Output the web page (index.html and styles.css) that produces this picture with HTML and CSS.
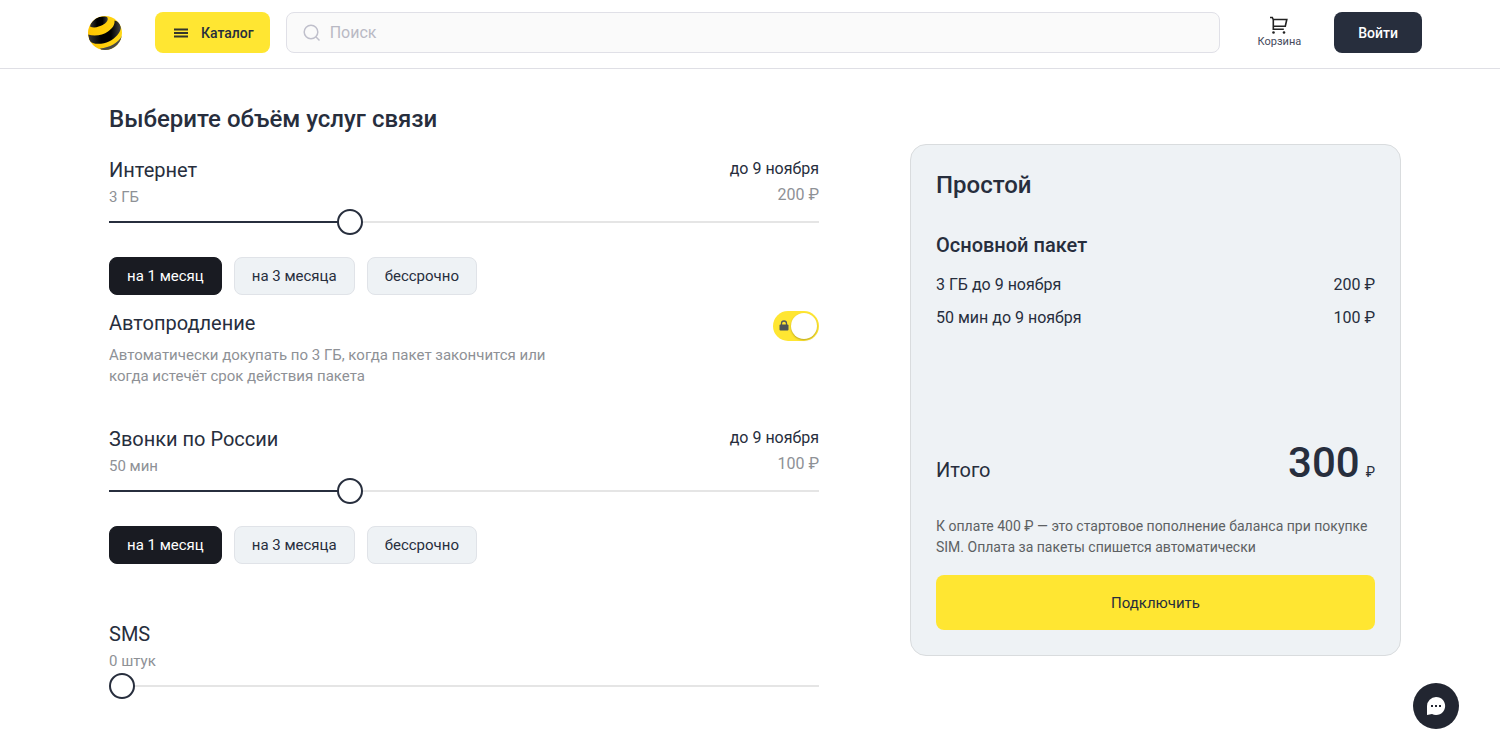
FILE: index.html
```html
<!DOCTYPE html>
<html lang="ru">
<head>
<meta charset="utf-8">
<meta name="viewport" content="width=device-width, initial-scale=1">
<title>Выберите объём услуг связи</title>
<link rel="stylesheet" href="styles.css">
</head>
<body>
<header class="header">
  <a class="logo" href="#" aria-label="Главная">
    <svg width="34" height="34" viewBox="0 0 34 34">
      <defs>
        <clipPath id="ball"><circle cx="17" cy="17" r="17"/></clipPath>
        <linearGradient id="dark" x1="0" y1="0" x2="1" y2="0"><stop offset="0" stop-color="#383838"/><stop offset=".4" stop-color="#000"/><stop offset=".7" stop-color="#000"/><stop offset="1" stop-color="#444"/></linearGradient>
        <linearGradient id="gold" x1="0" y1="0" x2="1" y2="0"><stop offset="0" stop-color="#ffc400"/><stop offset="1" stop-color="#ffd815"/></linearGradient>
      </defs>
      <g clip-path="url(#ball)">
        <rect width="34" height="34" fill="url(#gold)"/>
        <path d="M2 10.500C3 4 10-1 19 1C21 3 19 6.500 15 8.800C11 11 6 12.500 2 10.500Z" fill="url(#dark)"/>
        <path d="M0 18.500C7 21 15 19 20 15.500C24.500 12.500 27 8.500 26.500 4.500L31 6C33 9 33.500 12 32 15C29 21 23 25.500 16 27.200C10 28.500 4 28 1 24.500Z" fill="url(#dark)"/>
        <path d="M12 32.500C22 31.500 30 27 34 20L35 27L26 35H14Z" fill="#4a4a48"/>
      </g>
    </svg>
  </a>
  <button class="catalog" type="button">
    <svg width="14" height="10" viewBox="0 0 14 10"><path d="M0 1.500h14M0 5h14M0 8.500h14" stroke="#33352b" stroke-width="2"/></svg>
    Каталог
  </button>
  <label class="search">
    <svg width="18" height="18" viewBox="0 0 18 18" fill="none" stroke="#bfbfcb" stroke-width="1.5"><circle cx="8" cy="8" r="6.8"/><path d="M12.8 12.8L16.5 16.5"/></svg>
    <input class="search-input" type="search" placeholder="Поиск" aria-label="Поиск">
  </label>
  <a class="cart" href="#">
    <svg width="18" height="18" viewBox="0 0 18 18" fill="none" stroke="#222" stroke-width="1.6"><path d="M0 1.500h2.300l1 2.300v9.400h10.500"/><path d="M3 3.500h13.800l-1.500 6.700H3.300"/><g fill="#222" stroke="none"><circle cx="3.500" cy="16.500" r="1.300"/><circle cx="14" cy="16.500" r="1.300"/></g></svg>
    Корзина
  </a>
  <button class="login" type="button">Войти</button>
</header>

<main class="page">
  <form class="services">
    <h1 class="heading">Выберите объём услуг связи</h1>

    <section class="service">
      <div class="info">
        <div>
          <h2 class="name"><label for="internet">Интернет</label></h2>
          <p class="amount">3 ГБ</p>
        </div>
        <div class="price">
          <p class="until">до 9 ноября</p>
          <p class="cost">200 ₽</p>
        </div>
      </div>
      <input class="slider" id="internet" type="range" min="0" max="3" value="1" style="--fill:33%">
      <div class="periods">
        <button class="period period-active" type="button">на 1 месяц</button>
        <button class="period" type="button">на 3 месяца</button>
        <button class="period" type="button">бессрочно</button>
      </div>
      <div class="renewal">
        <div>
          <h2 class="name"><label for="renew">Автопродление</label></h2>
          <p class="hint">Автоматически докупать по 3 ГБ, когда пакет закончится или когда истечёт срок действия пакета</p>
        </div>
        <span class="switch">
          <input class="switch-input" id="renew" type="checkbox" checked>
          <svg class="lock" width="10" height="12" viewBox="0 0 10 12"><path d="M2.500 5V3.500a2.500 2.500 0 0 1 5 0V5" fill="none" stroke="#555a5c" stroke-width="1.300"/><rect x=".5" y="4.500" width="9" height="6" rx="1" fill="#4d5356"/></svg>
        </span>
      </div>
    </section>

    <section class="service service-calls">
      <div class="info">
        <div>
          <h2 class="name"><label for="calls">Звонки по России</label></h2>
          <p class="amount">50 мин</p>
        </div>
        <div class="price">
          <p class="until">до 9 ноября</p>
          <p class="cost">100 ₽</p>
        </div>
      </div>
      <input class="slider" id="calls" type="range" min="0" max="3" value="1" style="--fill:33%">
      <div class="periods">
        <button class="period period-active" type="button">на 1 месяц</button>
        <button class="period" type="button">на 3 месяца</button>
        <button class="period" type="button">бессрочно</button>
      </div>
    </section>

    <section class="service">
      <div class="info">
        <div>
          <h2 class="name"><label for="sms">SMS</label></h2>
          <p class="amount">0 штук</p>
        </div>
      </div>
      <input class="slider" id="sms" type="range" min="0" max="3" value="0" style="--fill:0%">
    </section>
  </form>

  <aside class="card">
    <h2 class="plan">Простой</h2>
    <h3 class="package">Основной пакет</h3>
    <dl class="items">
      <div class="item"><dt>3 ГБ до 9 ноября</dt><dd class="value">200 ₽</dd></div>
      <div class="item"><dt>50 мин до 9 ноября</dt><dd class="value">100 ₽</dd></div>
    </dl>
    <div class="total">
      <span class="total-label">Итого</span>
      <span class="sum"><strong class="sum-value">300</strong> ₽</span>
    </div>
    <p class="note">К оплате 400 ₽ — это стартовое пополнение баланса при покупке SIM. Оплата за пакеты спишется автоматически</p>
    <button class="connect" type="button">Подключить</button>
  </aside>
</main>

<button class="chat" type="button" aria-label="Чат">
  <svg width="20" height="20" viewBox="0 0 20 20"><path d="M10 1a9 9 0 1 1-4 17L1 19V10a9 9 0 0 1 9-9Z" fill="#fff"/><g fill="#222631"><rect x="5" y="9" width="2" height="2"/><rect x="9" y="9" width="2" height="2"/><rect x="13" y="9" width="2" height="2"/></g></svg>
</button>
</body>
</html>
```
FILE: styles.css
```css
* { box-sizing: border-box; }
body {
  margin: 0;
  background: #fff;
  color: #272e3d;
  font-family: Roboto, "Liberation Sans", sans-serif;
  font-size: 16px;
  line-height: 24px;
}
h1, h2, h3, p, dl, dd { margin: 0; font-weight: 400; }
button, input { font: inherit; color: inherit; }
button { border: 0; padding: 0; cursor: pointer; }
svg { display: block; }

.header {
  display: flex;
  align-items: center;
  padding: 12px 78px 15px 88px;
  border-bottom: 1px solid #dfdfe5;
}
.logo { margin-right: 33px; }
.catalog {
  display: flex;
  align-items: center;
  gap: 13px;
  height: 41px;
  margin-right: 16px;
  padding: 0 16px 0 19px;
  border-radius: 8px;
  background: #ffe632;
  font-size: 14px;
  font-weight: 500;
}
.search {
  display: flex;
  flex: 1;
  align-items: center;
  gap: 9px;
  height: 41px;
  padding: 0 16px;
  border: 1px solid #e0e0e7;
  border-radius: 8px;
  background: #fafafa;
}
.search-input {
  flex: 1;
  min-width: 0;
  padding: 0;
  border: 0;
  outline: 0;
  background: none;
}
.search-input::placeholder { color: #b9b9c4; opacity: 1; }
.cart {
  display: flex;
  flex-direction: column;
  align-items: center;
  margin: 0 33px 0 38px;
  color: #454a5c;
  font-size: 11px;
  line-height: 16px;
  text-decoration: none;
}
.login {
  height: 41px;
  padding: 0 24px;
  border-radius: 8px;
  background: #272e3d;
  color: #fff;
  font-size: 14px;
  font-weight: 500;
}

.page {
  display: grid;
  grid-template-columns: 710fr 491fr;
  align-items: start;
  gap: 91px;
  padding: 34px 99px 40px 109px;
}
.heading {
  margin-bottom: 21px;
  font-size: 24px;
  font-weight: 500;
  line-height: 32px;
}
.service { margin-bottom: 38px; }
.service-calls { margin-bottom: 56px; }
.info { display: flex; justify-content: space-between; }
.name { font-size: 20px; line-height: 28px; }
.amount { color: #8e9196; font-size: 15px; line-height: 26px; }
.price { text-align: right; line-height: 26px; }
.cost { color: #8e9196; }

.slider {
  display: block;
  width: 100%;
  height: 24px;
  margin: 0;
  appearance: none;
  background: none;
}
.slider::-webkit-slider-runnable-track {
  height: 2px;
  background: linear-gradient(to right, #272e3d var(--fill), #e5e5e5 var(--fill));
}
.slider::-webkit-slider-thumb {
  width: 26px;
  height: 26px;
  margin-top: -12px;
  appearance: none;
  border: 2px solid #272e3d;
  border-radius: 50%;
  background: #fff;
}
.periods { display: flex; gap: 12px; margin-top: 23px; }
.period {
  height: 38px;
  padding: 0 17px;
  border: 1px solid #e0e3e8;
  border-radius: 8px;
  background: #eef2f5;
  font-size: 15px;
}
.period-active { border-color: #191b22; background: #191b22; color: #fff; }
.renewal { display: flex; justify-content: space-between; margin-top: 14px; }
.hint {
  max-width: 460px;
  margin-top: 8px;
  color: #8e9196;
  font-size: 15px;
  line-height: 21px;
}
.switch { position: relative; height: 30px; margin-top: 2px; }
.switch-input {
  display: block;
  width: 46px;
  height: 30px;
  margin: 0;
  padding: 2px;
  appearance: none;
  border-radius: 15px;
  background: #ffe632;
}
.switch-input::before {
  content: "";
  display: block;
  width: 26px;
  height: 26px;
  border-radius: 50%;
  background: #fff;
  box-shadow: 0 1px 2px rgba(80, 70, 0, .4);
}
.switch-input:checked::before { margin-left: auto; }
.lock { position: absolute; top: 9px; left: 6px; pointer-events: none; }

.card {
  margin-top: 41px;
  padding: 24px 25px 25px;
  border: 1px solid #d9dcde;
  border-radius: 16px;
  background: #eef2f5;
}
.plan { font-size: 24px; font-weight: 500; line-height: 32px; }
.package { margin-top: 30px; font-size: 20px; font-weight: 500; line-height: 28px; }
.items { display: grid; gap: 9px; margin-top: 14px; }
.item { display: flex; justify-content: space-between; }
.total {
  display: flex;
  align-items: baseline;
  justify-content: space-between;
  margin-top: 109px;
  line-height: 48px;
}
.total-label { font-size: 20px; }
.sum { display: flex; align-items: baseline; gap: 6px; font-size: 14px; }
.sum-value { font-size: 42px; font-weight: 500; }
.note { margin-top: 20px; color: #5d6163; font-size: 14px; line-height: 21px; }
.connect {
  width: 100%;
  height: 55px;
  margin-top: 17px;
  border-radius: 8px;
  background: #ffe632;
  font-size: 15px;
}
.chat {
  position: fixed;
  right: 41px;
  bottom: 17px;
  display: grid;
  place-items: center;
  width: 46px;
  height: 46px;
  border-radius: 50%;
  background: #222631;
}
```
